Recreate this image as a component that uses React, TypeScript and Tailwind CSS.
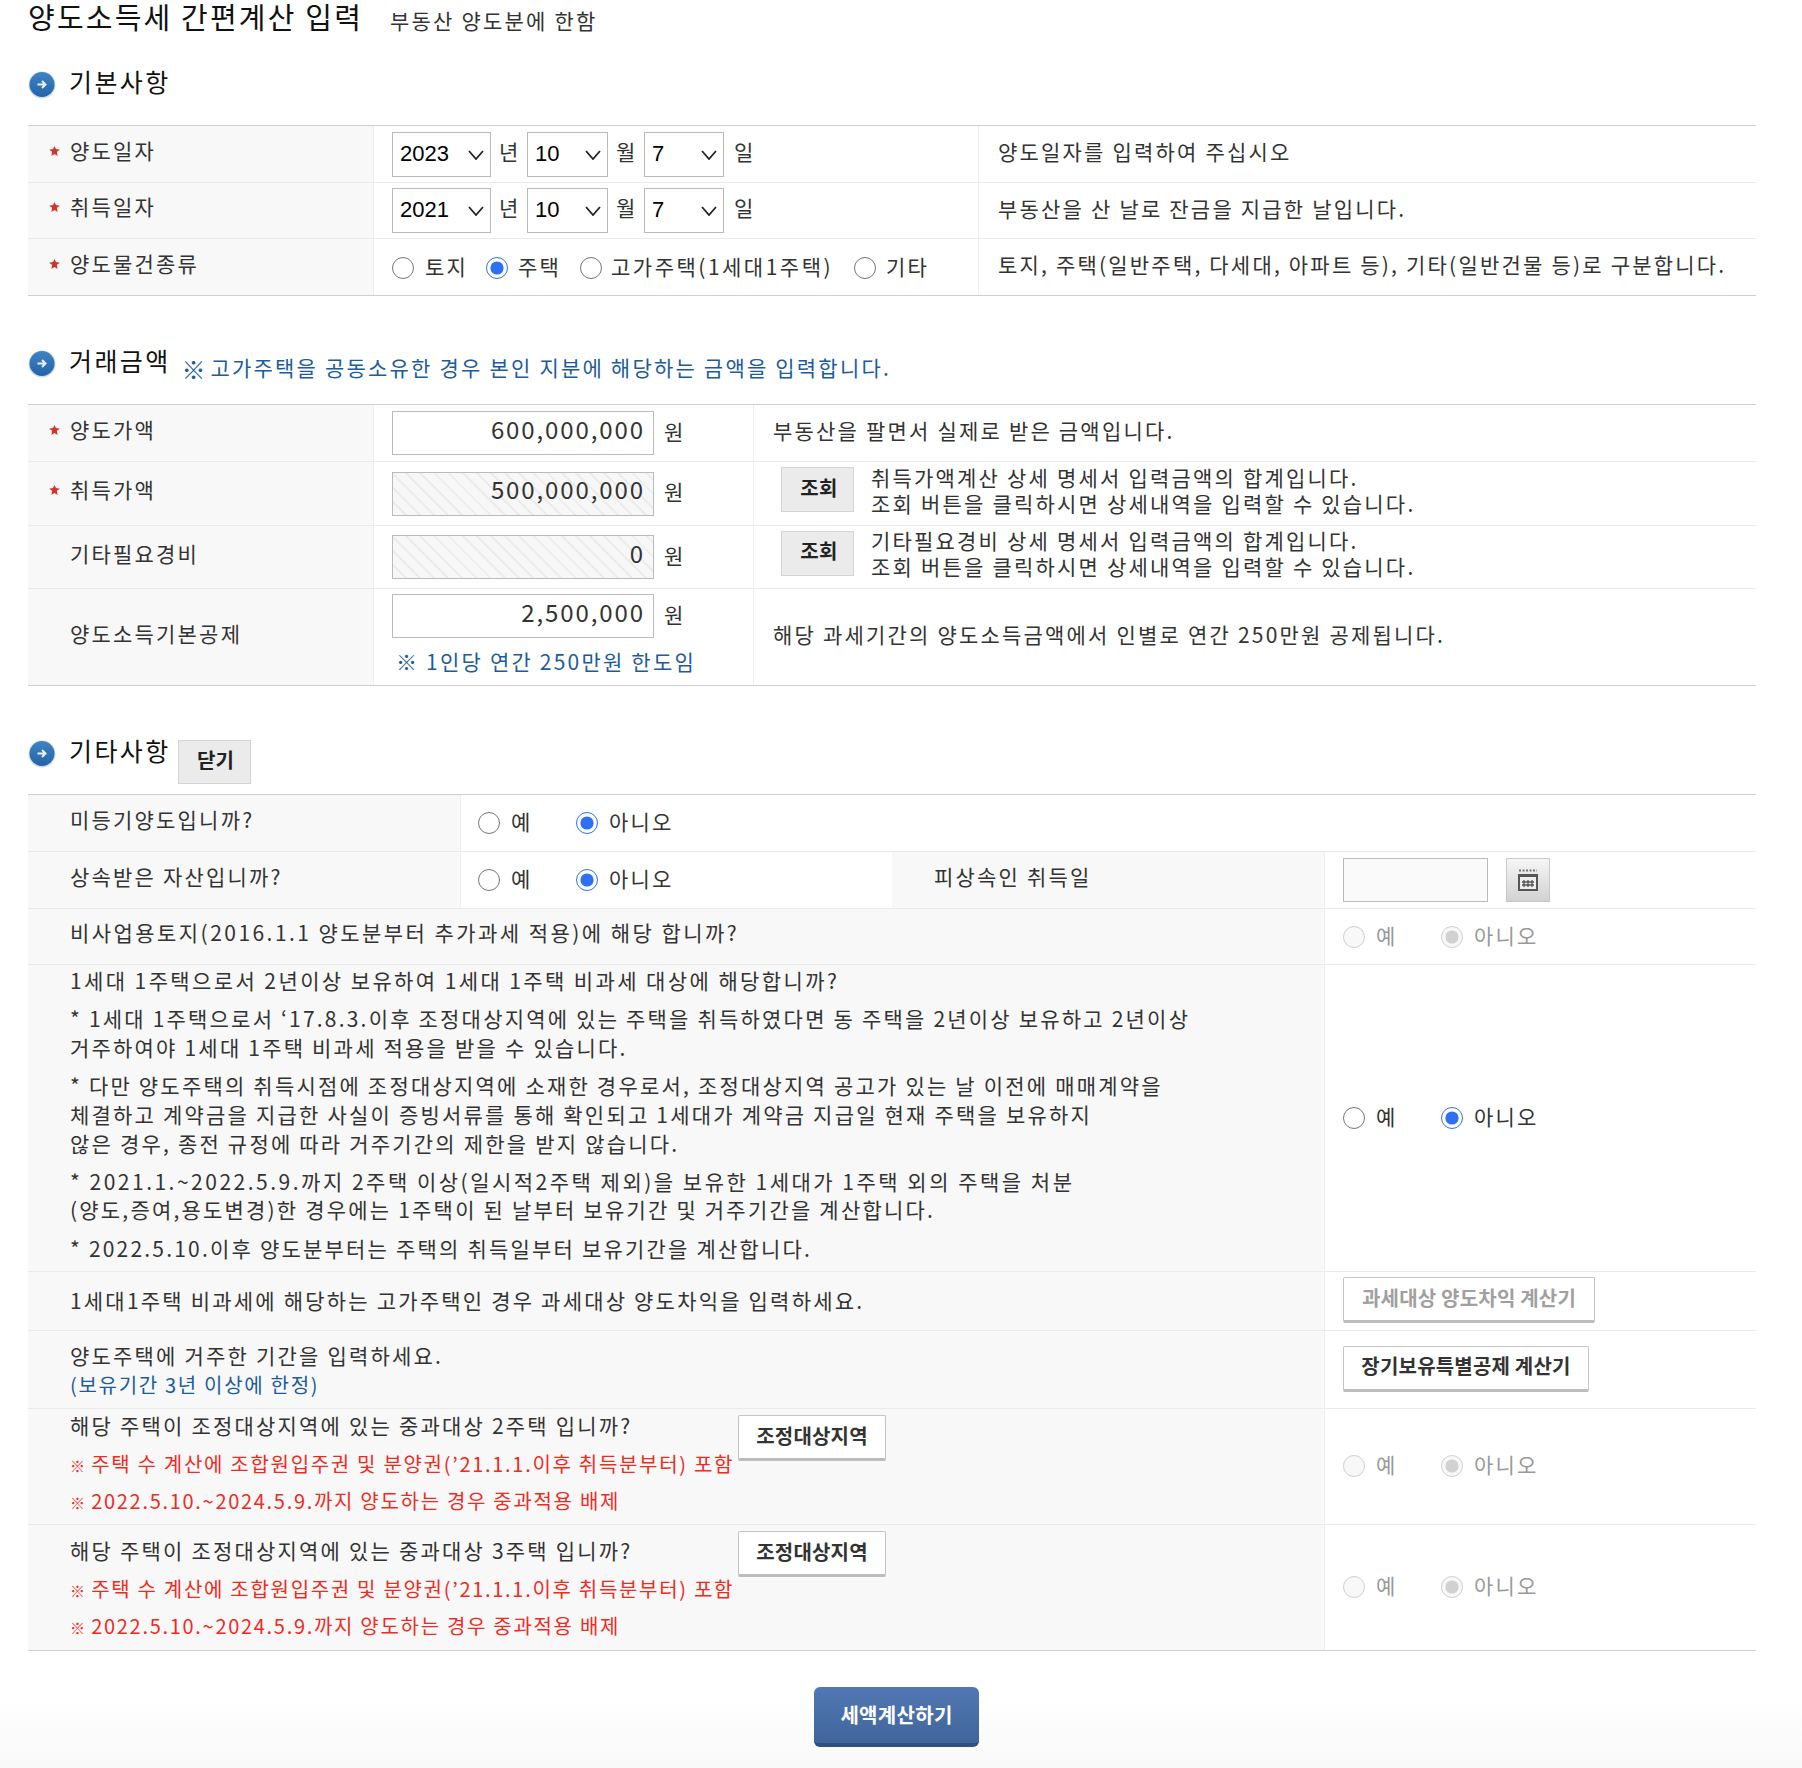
import React from "react";

function Star() {
  return (
    <svg width="11" height="10" viewBox="0 0 12 11" className="block">
      <path d="M6 0 L7.6 3.4 L12 4 L8.6 6.4 L9.4 11 L6 8.8 L2.6 11 L3.4 6.4 L0 4 L4.4 3.4 Z" fill="#d0352b" />
    </svg>
  );
}

function Bullet() {
  return (
    <svg width="28" height="28" viewBox="0 0 28 28" className="block shrink-0">
      <defs>
        <linearGradient id="bl" x1="0" y1="0" x2="0" y2="1">
          <stop offset="0" stopColor="#3f84c4" />
          <stop offset="1" stopColor="#2364a8" />
        </linearGradient>
      </defs>
      <circle cx="14" cy="14" r="13.5" fill="#cfdbe8" />
      <circle cx="14" cy="13.5" r="12.5" fill="url(#bl)" />
      <path d="M9.5 13.5 H17.5 M14 10 L17.5 13.5 L14 17" stroke="#e8f0f8" strokeWidth="2" fill="none" />
    </svg>
  );
}

function Heading({ children, after }: { children: string; after?: React.ReactNode }) {
  return (
    <div className="flex h-[54px] items-start">
      <Bullet />
      <h3 className="ml-[13px] text-[25px] leading-[20px] font-normal tracking-[2.4px] text-[#111]">{children}</h3>
      {after}
    </div>
  );
}

function Select({ value, w }: { value: string; w: string }) {
  return (
    <div className={`relative h-[45px] ${w}`}>
      <select
        defaultValue={value}
        className="h-full w-full appearance-none border border-[#bbb] bg-white pb-[2px] pl-[7px] font-['Liberation_Sans',sans-serif] text-[22px] tracking-normal text-black"
      >
        <option>{value}</option>
      </select>
      <svg width="16" height="10" viewBox="0 0 16 10" className="pointer-events-none absolute top-[18px] right-[7px]">
        <path d="M1 1 L8 9 L15 1" stroke="#222" strokeWidth="1.8" fill="none" />
      </svg>
    </div>
  );
}

function Radio({ on, off }: { on?: boolean; off?: boolean }) {
  return (
    <input
      type="radio"
      readOnly
      checked={!!on}
      disabled={off}
      className="m-0 h-[22px] w-[22px] shrink-0 accent-[#2d6ff5]"
    />
  );
}

function YesNo({ off, w = "w-[98px]" }: { off?: boolean; w?: string }) {
  return (
    <div className={`flex items-center ${off ? "text-[#999]" : ""}`}>
      <div className={`flex items-center ${w}`}>
        <Radio off={off} />
        <span className="ml-[11px] pb-[2px]">예</span>
      </div>
      <div className="flex items-center">
        <Radio on off={off} />
        <span className="ml-[11px] pb-[2px]">아니오</span>
      </div>
    </div>
  );
}

function Money({ value, hatch, h = "h-[44px]" }: { value: string; hatch?: boolean; h?: string }) {
  return (
    <div className="flex items-center">
      <input
        readOnly
        value={value}
        className={`${h} w-[262px] border border-[#bbb] pr-[8px] pb-[10px] text-right text-[24px] leading-[28px] tracking-[1.9px] text-[#333] ${
          hatch
            ? "bg-[repeating-linear-gradient(45deg,#f7f7f7_0px,#f7f7f7_8px,#ececec_8px,#ececec_10px)]"
            : "bg-white"
        }`}
      />
      <span className="ml-[10px] pb-[3px]">원</span>
    </div>
  );
}

function GrayBtn({ children, className }: { children: string; className: string }) {
  return (
    <button className={`shrink-0 border border-[#d4d4d4] bg-[#ebebeb] pb-[4px] pl-[3px] text-[20px] font-bold tracking-[0.3px] text-[#222] ${className}`}>
      {children}
    </button>
  );
}

function WhiteBtn({ children, className }: { children: string; className: string }) {
  return (
    <button className={`shrink-0 rounded-[2px] border border-[#c4c4c4] border-b-[3px] border-b-[#bdbdbd] bg-white pb-[3px] text-[20px] font-bold tracking-[0.2px] ${className}`}>
      {children}
    </button>
  );
}

function Row({ h, children }: { h: string; children: React.ReactNode }) {
  return <div className={`flex border-b border-[#eaeaea] last:border-[#cfcfcf] ${h}`}>{children}</div>;
}

function Label({ star, w, children }: { star?: boolean; w: string; children: string }) {
  return (
    <div className={`flex shrink-0 items-center border-r border-[#eee] bg-[#f8f8f8] pb-[7px] ${w}`}>
      <span className="flex w-[42px] shrink-0 justify-end pr-[10px]">{star && <Star />}</span>
      <span>{children}</span>
    </div>
  );
}

function Desc({ children }: { children: React.ReactNode }) {
  return <div className="flex flex-1 items-center pb-[4px] pl-[19px]">{children}</div>;
}

function DateRow({ year }: { year: string }) {
  return (
    <div className="flex w-[605px] shrink-0 items-center border-r border-[#eee] pl-[18px]">
      <Select value={year} w="w-[99px]" />
      <span className="w-[36px] pb-[5px] pl-[8px]">년</span>
      <Select value="10" w="w-[81px]" />
      <span className="w-[36px] pb-[5px] pl-[8px]">월</span>
      <Select value="7" w="w-[80px]" />
      <span className="pb-[5px] pl-[10px]">일</span>
    </div>
  );
}

function MoneyCol({ className = "", children }: { className?: string; children: React.ReactNode }) {
  return <div className={`flex w-[380px] shrink-0 flex-col justify-center border-r border-[#eee] pl-[18px] ${className}`}>{children}</div>;
}

function LookupDesc({ a, b }: { a: string; b: string }) {
  return (
    <div className="flex flex-1 items-center pl-[27px]">
      <GrayBtn className="mb-[8px] h-[45px] w-[73px]">조회</GrayBtn>
      <div className="mb-[8px] ml-[17px] leading-[26px]">
        {a}
        <br />
        {b}
      </div>
    </div>
  );
}

function RightCol({ className = "", children }: { className?: string; children: React.ReactNode }) {
  return <div className={`flex flex-1 items-center pl-[18px] ${className}`}>{children}</div>;
}

function LeftCol({ className = "", children }: { className?: string; children: React.ReactNode }) {
  return <div className={`w-[1297px] shrink-0 border-r border-[#eee] bg-[#f8f8f8] pl-[42px] ${className}`}>{children}</div>;
}

function HeavyRow({ n, pt, btnMt }: { n: string; pt: string; btnMt: string }) {
  return (
    <LeftCol className={`flex ${pt}`}>
      <div className="w-[668px] shrink-0">
        <div className="leading-[29px]">해당 주택이 조정대상지역에 있는 중과대상 {n}주택 입니까?</div>
        <div className="mt-[9px] text-[20px] leading-[29px] tracking-[1.7px] whitespace-nowrap text-[#f02a1e]">
          <span className="text-[15px] tracking-normal">※</span> 주택 수 계산에 조합원입주권 및 분양권(’21.1.1.이후 취득분부터) 포함
        </div>
        <div className="mt-[6px] text-[20px] leading-[29px] tracking-[1.7px] whitespace-nowrap text-[#f02a1e]">
          <span className="text-[15px] tracking-normal">※</span> 2022.5.10.~2024.5.9.까지 양도하는 경우 중과적용 배제
        </div>
      </div>
      <WhiteBtn className={`h-[46px] w-[148px] ${btnMt}`}>조정대상지역</WhiteBtn>
    </LeftCol>
  );
}

export default function App() {
  return (
    <div className="h-[1768px] w-[1802px] overflow-hidden bg-[linear-gradient(to_bottom,#fff_1700px,#f8f8f8_1768px)] pr-[46px] pl-[28px] font-['Noto_Sans_CJK_KR','Liberation_Sans',sans-serif] text-[21px] tracking-[2.2px] text-[#333]">
      <div className="flex h-[71px] items-start">
        <h1 className="text-[29px] leading-[32px] font-normal tracking-[2.2px] text-[#111]">양도소득세 간편계산 입력</h1>
        <span className="mt-[5px] ml-[27px] leading-[30px]">부동산 양도분에 한함</span>
      </div>

      <Heading>기본사항</Heading>
      <div className="border-t border-[#cfcfcf]">
        <Row h="h-[57px]">
          <Label star w="w-[346px]">양도일자</Label>
          <DateRow year="2023" />
          <Desc>양도일자를 입력하여 주십시오</Desc>
        </Row>
        <Row h="h-[56px]">
          <Label star w="w-[346px]">취득일자</Label>
          <DateRow year="2021" />
          <Desc>부동산을 산 날로 잔금을 지급한 날입니다.</Desc>
        </Row>
        <Row h="h-[57px]">
          <Label star w="w-[346px]">양도물건종류</Label>
          <div className="flex w-[605px] shrink-0 items-center border-r border-[#eee] pt-[2px] pl-[18px]">
            <div className="flex w-[94px] items-center">
              <Radio />
              <span className="ml-[11px] pb-[2px]">토지</span>
            </div>
            <div className="flex w-[94px] items-center">
              <Radio on />
              <span className="ml-[10px] pb-[2px]">주택</span>
            </div>
            <div className="flex w-[274px] items-center">
              <Radio />
              <span className="ml-[9px] pb-[2px] tracking-[2.5px]">고가주택(1세대1주택)</span>
            </div>
            <div className="flex items-center">
              <Radio />
              <span className="ml-[10px] pb-[2px]">기타</span>
            </div>
          </div>
          <Desc>토지, 주택(일반주택, 다세대, 아파트 등), 기타(일반건물 등)로 구분합니다.</Desc>
        </Row>
      </div>

      <div className="mt-[54px]">
        <Heading
          after={
            <p className="mt-[3px] ml-[11px] leading-[26px] text-[#1c5c9c]">
              <span className="relative top-[3px] text-[24px] tracking-[-2px]">※</span> 고가주택을 공동소유한 경우 본인 지분에 해당하는 금액을 입력합니다.
            </p>
          }
        >
          거래금액
        </Heading>
      </div>
      <div className="border-t border-[#cfcfcf]">
        <Row h="h-[57px]">
          <Label star w="w-[346px]">양도가액</Label>
          <MoneyCol>
            <Money value="600,000,000" />
          </MoneyCol>
          <Desc>부동산을 팔면서 실제로 받은 금액입니다.</Desc>
        </Row>
        <Row h="h-[64px]">
          <Label star w="w-[346px]">취득가액</Label>
          <MoneyCol>
            <Money value="500,000,000" hatch />
          </MoneyCol>
          <LookupDesc a="취득가액계산 상세 명세서 입력금액의 합계입니다." b="조회 버튼을 클릭하시면 상세내역을 입력할 수 있습니다." />
        </Row>
        <Row h="h-[63px]">
          <Label w="w-[346px]">기타필요경비</Label>
          <MoneyCol>
            <Money value="0" hatch />
          </MoneyCol>
          <LookupDesc a="기타필요경비 상세 명세서 입력금액의 합계입니다." b="조회 버튼을 클릭하시면 상세내역을 입력할 수 있습니다." />
        </Row>
        <Row h="h-[97px]">
          <Label w="w-[346px]">양도소득기본공제</Label>
          <MoneyCol className="pb-[6px]">
            <Money value="2,500,000" />
            <div className="mt-[10px] pl-[4px] leading-[26px] text-[#1c5c9c]">※ 1인당 연간 250만원 한도임</div>
          </MoneyCol>
          <Desc>해당 과세기간의 양도소득금액에서 인별로 연간 250만원 공제됩니다.</Desc>
        </Row>
      </div>

      <div className="mt-[54px]">
        <Heading after={<GrayBtn className="ml-[7px] h-[44px] w-[73px]">닫기</GrayBtn>}>기타사항</Heading>
      </div>
      <div className="border-t border-[#cfcfcf]">
        <Row h="h-[57px]">
          <Label w="w-[433px]">미등기양도입니까?</Label>
          <div className="flex flex-1 items-center pl-[17px]">
            <YesNo />
          </div>
        </Row>
        <Row h="h-[57px]">
          <Label w="w-[433px]">상속받은 자산입니까?</Label>
          <div className="flex w-[431px] shrink-0 items-center pl-[17px]">
            <YesNo />
          </div>
          <Label w="w-[433px]">피상속인 취득일</Label>
          <RightCol>
            <input readOnly className="h-[44px] w-[145px] border border-[#bbb] bg-[#fafafa]" />
            <button className="ml-[18px] flex h-[44px] w-[44px] items-center justify-center border border-[#c8c8c8] bg-linear-to-b from-[#f6f6f6] to-[#d2d2d2]">
              <svg width="20" height="22" viewBox="0 0 20 22">
                <path d="M1 1.5 H19" stroke="#777" strokeWidth="2" strokeDasharray="2 1.5" />
                <rect x="1" y="6" width="18" height="15" fill="#eee" stroke="#555" strokeWidth="2" />
                <rect x="1" y="5" width="18" height="3" fill="#555" />
                <path d="M4 13 H16 M4 16 H16 M6 11 V18 M10 11 V18 M14 11 V18" stroke="#555" strokeWidth="1.3" />
              </svg>
            </button>
          </RightCol>
        </Row>
        <Row h="h-[56px]">
          <LeftCol className="flex items-center pb-[7px] tracking-[2.45px]">비사업용토지(2016.1.1 양도분부터 추가과세 적용)에 해당 합니까?</LeftCol>
          <RightCol>
            <YesNo off />
          </RightCol>
        </Row>
        <Row h="h-[307px]">
          <LeftCol className="pt-[1px] leading-[28.7px]">
            <p className="tracking-[2.4px]">1세대 1주택으로서 2년이상 보유하여 1세대 1주택 비과세 대상에 해당합니까?</p>
            <p className="mt-[9.5px]">
              * 1세대 1주택으로서 ‘17.8.3.이후 조정대상지역에 있는 주택을 취득하였다면 동 주택을 2년이상 보유하고 2년이상
              <br />
              거주하여야 1세대 1주택 비과세 적용을 받을 수 있습니다.
            </p>
            <p className="mt-[9.5px]">
              * 다만 양도주택의 취득시점에 조정대상지역에 소재한 경우로서, 조정대상지역 공고가 있는 날 이전에 매매계약을
              <br />
              체결하고 계약금을 지급한 사실이 증빙서류를 통해 확인되고 1세대가 계약금 지급일 현재 주택을 보유하지
              <br />
              않은 경우, 종전 규정에 따라 거주기간의 제한을 받지 않습니다.
            </p>
            <p className="mt-[9.5px]">
              <span className="tracking-[2.5px]">* 2021.1.~2022.5.9.까지 2주택 이상(일시적2주택 제외)을 보유한 1세대가 1주택 외의 주택을 처분</span>
              <br />
              (양도,증여,용도변경)한 경우에는 1주택이 된 날부터 보유기간 및 거주기간을 계산합니다.
            </p>
            <p className="mt-[9.5px]">* 2022.5.10.이후 양도분부터는 주택의 취득일부터 보유기간을 계산합니다.</p>
          </LeftCol>
          <RightCol>
            <YesNo />
          </RightCol>
        </Row>
        <Row h="h-[59px]">
          <LeftCol className="flex items-center">1세대1주택 비과세에 해당하는 고가주택인 경우 과세대상 양도차익을 입력하세요.</LeftCol>
          <RightCol className="pb-[2px]">
            <WhiteBtn className="h-[46px] w-[252px] text-[#a0a0a0]">과세대상 양도차익 계산기</WhiteBtn>
          </RightCol>
        </Row>
        <Row h="h-[78px]">
          <LeftCol className="pt-[9px] leading-[30px]">
            양도주택에 거주한 기간을 입력하세요.
            <div className="text-[20px] tracking-[1.7px] text-[#1c5c9c]">(보유기간 3년 이상에 한정)</div>
          </LeftCol>
          <RightCol className="pb-[2px]">
            <WhiteBtn className="h-[46px] w-[246px]">장기보유특별공제 계산기</WhiteBtn>
          </RightCol>
        </Row>
        <Row h="h-[116px]">
          <HeavyRow n="2" pt="pt-[2px]" btnMt="mt-[4px]" />
          <RightCol className="pb-[2px]">
            <YesNo off />
          </RightCol>
        </Row>
        <Row h="h-[126px]">
          <HeavyRow n="3" pt="pt-[11px]" btnMt="-mt-[5px]" />
          <RightCol className="pb-[2px]">
            <YesNo off />
          </RightCol>
        </Row>
      </div>

      <div className="mt-[36px] flex justify-center pl-[9px]">
        <button className="h-[60px] w-[165px] rounded-[6px] border-b-[4px] border-[#2f4f80] bg-linear-to-b from-[#5278b4] to-[#40659b] pb-[1px] text-[20px] font-bold tracking-[0.3px] text-white">
          세액계산하기
        </button>
      </div>
    </div>
  );
}
